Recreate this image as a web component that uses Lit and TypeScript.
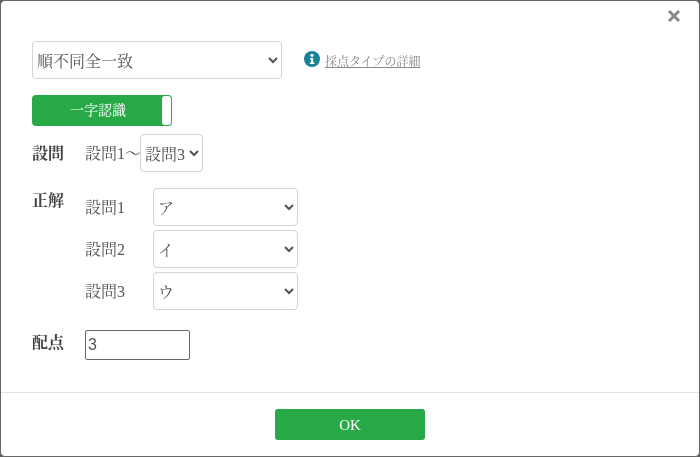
import { LitElement, html, css } from "lit";
import { customElement } from "lit/decorators.js";

@customElement("app-root")
export class AppRoot extends LitElement {
  static styles = css`
    :host { display: block; width: 700px; height: 457px; background: #5f5f5f; font-family: "Liberation Serif", "Noto Serif CJK JP", "Noto Sans CJK JP", serif; color: #555; }
    * { box-sizing: border-box; }
    .modal { position: relative; height: 457px; background: #fff; border: 1px solid #666; border-radius: 5px; display: flex; flex-direction: column; overflow: hidden; will-change: transform; }
    .close { position: absolute; top: 7px; right: 17px; width: 16px; height: 16px; display: block; }
    .body { flex: 1; padding: 40px 31px 0; display: flex; flex-direction: column; }
    select { font-family: inherit; color: #555; background-color: #fff; border: 1px solid #ced4da; border-radius: 4px; font-size: 16px; height: 38px; padding: 2px 0 0; margin: 0; outline: none; }
    .type-row { display: flex; align-items: center; }
    .type { width: 250px; }
    .info { display: flex; align-items: center; margin-left: 22px; gap: 5px; font-size: 12px; color: #888; }
    .info svg { width: 16px; height: 16px; margin-top: -2px; }
    .info a { color: #888; text-decoration: underline; margin-top: 2px; }
    .toggle { margin-top: 16px; width: 140px; height: 31px; background: #28a948; border-radius: 4px; padding: 1px; display: flex; color: #fff; font-size: 14px; align-items: center; }
    .toggle span { flex: 1; text-align: center; padding-left: 1px; margin-top: -3px; }
    .toggle i { width: 9px; height: 29px; background: #fff; border-radius: 3px; display: block; }
    .line { display: flex; align-items: center; margin-top: 8px; }
    .head { width: 53px; font-weight: bold; font-size: 16px; color: #444; }
    .line .head, .line .range { margin-top: -2px; }
    .range { font-size: 16px; width: 55px; white-space: nowrap; }
    .range-sel { width: 63px; }
    .answers { display: flex; margin-top: 16px; }
    .rows { display: flex; flex-direction: column; gap: 4px; }
    .row { display: flex; align-items: center; font-size: 16px; }
    .row label { width: 68px; margin-top: -2px; }
    .row select { width: 145px; padding-top: 3px; }
    .points { display: flex; align-items: center; margin-top: 20px; }
    .points .head { margin-top: -8px; }
    input { width: 105px; height: 30px; border: 1px solid #666; border-radius: 2px; font: inherit; font-family: "Liberation Sans", sans-serif; font-size: 16px; color: #555; padding: 1px 2px; outline: none; }
    .footer { height: 64px; border-top: 1px solid #e2e2e2; display: flex; justify-content: center; padding-top: 16px; }
    .ok { width: 150px; height: 31px; background: #28a948; border: 0; border-radius: 3px; color: #fff; font-family: inherit; font-size: 15px; padding: 2px 0 0; }
  `;

  private sel(value: string, cls: string) {
    return html`<select class=${cls}><option>${value}</option></select>`;
  }

  render() {
    return html`
      <div class="modal">
        <svg class="close" viewBox="0 0 16 16"><path d="M3 3 L13 13 M13 3 L3 13" stroke="#888" stroke-width="3" fill="none"/></svg>
        <div class="body">
          <div class="type-row">
            ${this.sel("順不同全一致", "type")}
            <div class="info">
              <svg viewBox="0 0 16 16"><circle cx="8" cy="8" r="8" fill="#17839b"/><circle cx="8" cy="4.3" r="1.6" fill="#fff"/><path d="M6 7h3.2v4.6H10.4V13H5.8v-1.4H7V8.4H6z" fill="#fff"/></svg>
              <a>採点タイプの詳細</a>
            </div>
          </div>
          <div class="toggle"><span>一字認識</span><i></i></div>
          <div class="line">
            <div class="head">設問</div>
            <div class="range">設問1〜</div>
            ${this.sel("設問3", "range-sel")}
          </div>
          <div class="answers">
            <div class="head">正解</div>
            <div class="rows">
              <div class="row"><label>設問1</label>${this.sel("ア", "")}</div>
              <div class="row"><label>設問2</label>${this.sel("イ", "")}</div>
              <div class="row"><label>設問3</label>${this.sel("ウ", "")}</div>
            </div>
          </div>
          <div class="points">
            <div class="head">配点</div>
            <input value="3" />
          </div>
        </div>
        <div class="footer"><button class="ok">OK</button></div>
      </div>
    `;
  }
}
